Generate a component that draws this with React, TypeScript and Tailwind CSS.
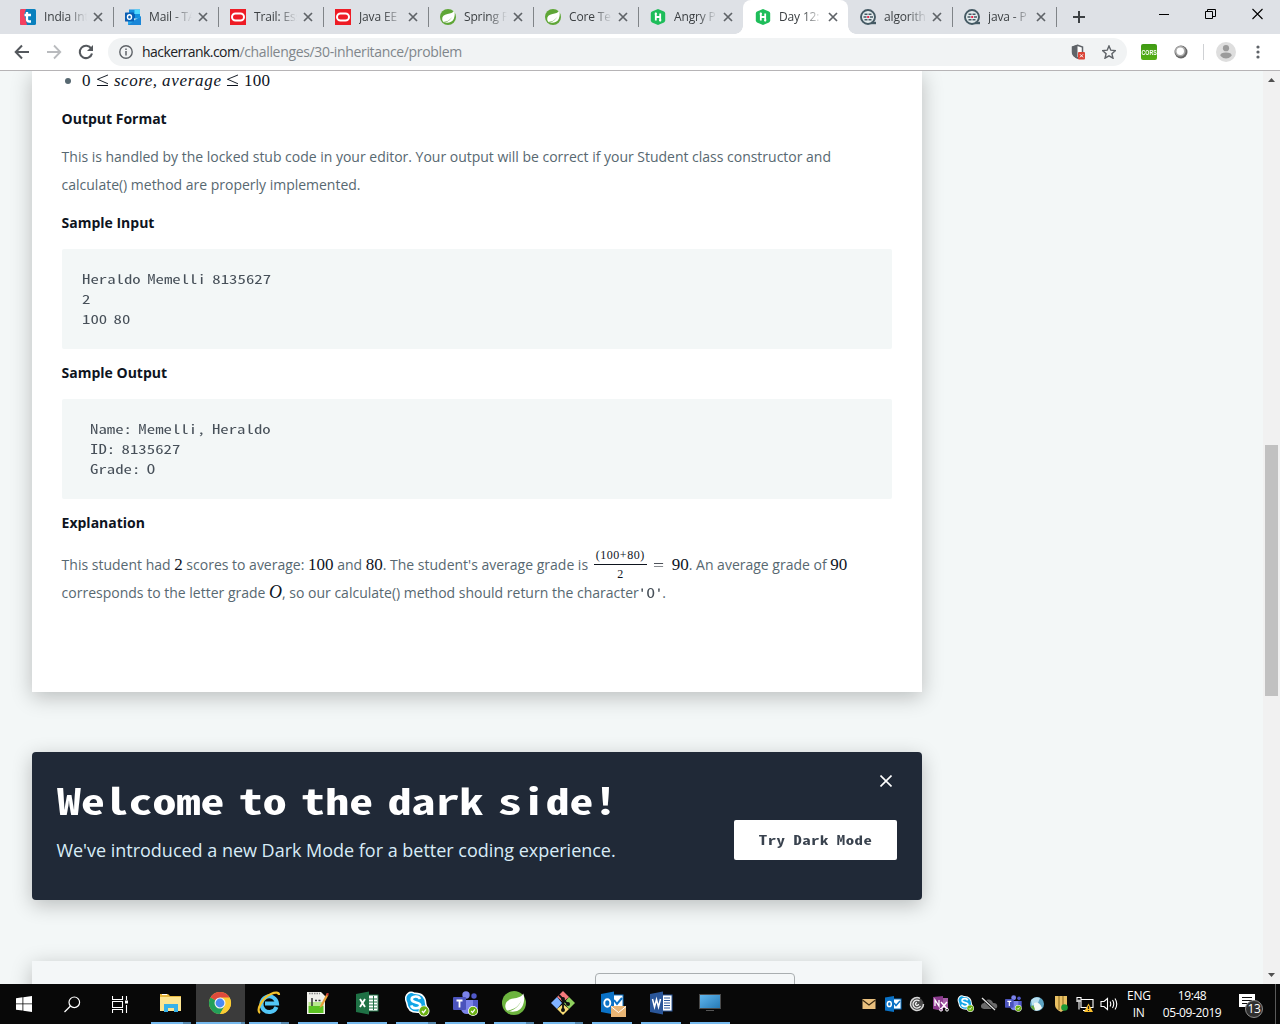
import React from "react";

const UI = "font-['Open_Sans','Noto_Sans',sans-serif]";
const MONO = "font-['Noto_Sans_Mono_CJK_SC','Liberation_Mono',monospace]";
const SERIF = "font-['Liberation_Serif',serif]";

type IconProps = { className?: string };

/* ---------- favicons ---------- */

function TcsIcon() {
  return (
    <svg width="16" height="16" viewBox="0 0 16 16">
      <rect width="16" height="16" rx="1.5" fill="#0a80bd" />
      <path d="M1.5 0H6l-2 6 1.500 4L7 16H1.500A1.500 1.500 0 0 1 0 14.500v-13A1.500 1.500 0 0 1 1.500 0z" fill="#f4405f" />
      <path d="M7 3v7.300q0 2.200 2.200 2.200H11M4.500 6H11" fill="none" stroke="#fff" strokeWidth="2.300" />
    </svg>
  );
}

function OutlookIcon() {
  return (
    <svg width="16" height="16" viewBox="0 0 16 16">
      <rect x="4" y="0.500" width="11" height="9" fill="#1490df" />
      <rect x="9.500" y="0.500" width="5.500" height="4.500" fill="#50d9ff" />
      <rect x="4" y="5" width="6" height="4" fill="#0364b8" />
      <path d="M3 7l6.500 4L16 7v9H3z" fill="#28a8ea" />
      <path d="M3 16L16 7.500V16z" fill="#1a86d8" />
      <rect x="0" y="3.500" width="9" height="9" rx="0.500" fill="#0a5fb4" />
      <ellipse cx="4.500" cy="8" rx="2" ry="2.300" fill="none" stroke="#fff" strokeWidth="1.400" />
    </svg>
  );
}

function OracleIcon() {
  return (
    <svg width="16" height="16" viewBox="0 0 16 16">
      <rect width="16" height="16" fill="#ee1c25" />
      <rect x="2" y="4.500" width="12" height="7" rx="3.500" fill="none" stroke="#fff" strokeWidth="2" />
    </svg>
  );
}

function SpringIcon({ className = "size-4", fill = "#5fa637" }: IconProps & { fill?: string }) {
  return (
    <svg className={className} viewBox="0 0 16 16">
      <circle cx="8" cy="8" r="8" fill={fill} />
      <path d="M14.200 1.600C13 4 10.500 4.500 7.500 5 4 5.600 2 7.500 2.200 10.300c.1 1.300.8 2.400 1.500 3C8 14.500 12 13.500 13.700 10c1.200-2.600 1.400-5.700.5-8.400z" fill="#fff" />
      <path d="M3 13.100c4.500-.6 7.800-2.300 9.800-6.600-1.700 4-4.600 6.300-8.300 7.100z" fill={fill} />
    </svg>
  );
}

function HackerRankIcon() {
  return (
    <svg width="16" height="16" viewBox="0 0 16 16">
      <path d="M8 0l6 2.600q1.200.6 1.200 1.800v7.200q0 1.200-1.200 1.800L8 16l-6-2.600Q.8 12.800.8 11.600V4.400Q.8 3.200 2 2.600z" fill="#1ebd5a" />
      <path d="M5.800 3.800v7.800M10.200 4.400v7.800M5.800 8h4.400" stroke="#fff" strokeWidth="1.800" fill="none" />
      <path d="M4.300 5.200l1.500-2 1.500 2zM8.700 10.800l1.500 2 1.500-2z" fill="#fff" />
    </svg>
  );
}

function QuizIcon() {
  return (
    <svg width="17" height="17" viewBox="0 0 17 17">
      <circle cx="8" cy="8" r="7" fill="#e4ecee" stroke="#455a64" strokeWidth="1.900" />
      <path d="M11 14h5" stroke="#455a64" strokeWidth="2.400" />
      <path d="M4.500 5.200h3M8.500 5.200h3M3.500 8h3M10 8h3M4.500 10.800h3M8.500 10.800h3" stroke="#455a64" strokeWidth="1.600" />
      <rect x="7.200" y="7" width="2" height="2" fill="#e8274b" />
    </svg>
  );
}

/* ---------- browser chrome ---------- */

function Cross({ className }: IconProps) {
  return (
    <svg className={className} viewBox="0 0 10 10">
      <path d="M1 1l8 8M9 1L1 9" stroke="currentColor" strokeWidth="1.700" fill="none" />
    </svg>
  );
}

type TabProps = { icon: React.ReactNode; title: string; active?: boolean; narrow?: boolean; noLine?: boolean };

function Tab({ icon, title, active, narrow, noLine }: TabProps) {
  return (
    <div
      className={`relative flex h-[34px] shrink-0 items-center pl-3 ${narrow ? "w-[104px]" : "w-[105px]"} ${
        active ? "rounded-t-lg bg-white" : ""
      }`}
    >
      <div className="w-6 shrink-0">{icon}</div>
      <div
        className={`text-[12px] leading-4 tracking-[-0.15px] whitespace-nowrap text-[#3c4043] [mask-image:linear-gradient(to_right,black_24px,transparent_43px)] ${
          narrow ? "w-[42px]" : "w-[43px]"
        }`}
      >
        {title}
      </div>
      <Cross className="ml-[6px] size-[10px] shrink-0 text-[#5f6368]" />
      {!active && !noLine && <div className="absolute top-[7px] right-[-1px] h-5 w-px bg-[#808488]" />}
      {active && (
        <>
          <div className="absolute bottom-0 left-[-8px] size-2 bg-[radial-gradient(circle_at_0_0,transparent_7.500px,white_8px)]" />
          <div className="absolute right-[-8px] bottom-0 size-2 bg-[radial-gradient(circle_at_100%_0,transparent_7.500px,white_8px)]" />
        </>
      )}
    </div>
  );
}

function TabStrip() {
  return (
    <div className="flex h-[34px] bg-[#dee1e6] pl-2">
      <Tab icon={<TcsIcon />} title="India Int" />
      <Tab icon={<OutlookIcon />} title="Mail - TA" />
      <Tab icon={<OracleIcon />} title="Trail: Ess" />
      <Tab icon={<OracleIcon />} title="Java EE" />
      <Tab icon={<SpringIcon />} title="Spring F" />
      <Tab icon={<SpringIcon />} title="Core Te" />
      <Tab icon={<HackerRankIcon />} title="Angry P" noLine />
      <Tab icon={<HackerRankIcon />} title="Day 12:" active />
      <Tab icon={<QuizIcon />} title="algorith" narrow />
      <Tab icon={<QuizIcon />} title="java - P" narrow />
      <svg className="mt-[11px] ml-[17px] size-3" viewBox="0 0 12 12">
        <path d="M6 0v12M0 6h12" stroke="#3c4043" strokeWidth="2" />
      </svg>
      <div className="ml-auto flex pt-2 pr-[17px] text-black">
        <svg width="10" height="12" viewBox="0 0 10 12" className="mr-9">
          <path d="M0 6.500h10" stroke="#000" />
        </svg>
        <svg width="11" height="12" viewBox="0 0 11 12" className="mr-9">
          <path d="M.5 3.500h7v7h-7zM2.500 3.500v-2h8v7h-3" stroke="#000" fill="none" />
        </svg>
        <svg width="11" height="12" viewBox="0 0 11 12">
          <path d="M.5 1l10 10M10.500 1L.5 11" stroke="#000" strokeWidth="1.100" />
        </svg>
      </div>
    </div>
  );
}

function Toolbar() {
  return (
    <div className="flex h-[37px] items-center border-b border-[#b6b4b6] bg-white pl-[14px]">
      <svg width="16" height="16" viewBox="0 0 16 16" className="mr-4">
        <path d="M15 8H2M8 1.500L1.700 8 8 14.500" stroke="#54585d" strokeWidth="2" fill="none" />
      </svg>
      <svg width="16" height="16" viewBox="0 0 16 16" className="mr-4">
        <path d="M1 8h13M8 1.500L14.300 8 8 14.500" stroke="#b9bbbe" strokeWidth="1.800" fill="none" />
      </svg>
      <svg width="16" height="16" viewBox="0 0 16 16">
        <path d="M13.300 4.700A6.200 6.200 0 1 0 14 9.500" stroke="#54585d" strokeWidth="2.100" fill="none" />
        <path d="M15 1v6H9z" fill="#54585d" />
      </svg>
      <div className="ml-[14px] flex h-7 w-[1019px] items-center rounded-full bg-[#f1f3f4] pl-[11px]">
        <svg width="14" height="14" viewBox="0 0 14 14">
          <circle cx="7" cy="7" r="6.200" fill="none" stroke="#5f6368" strokeWidth="1.400" />
          <path d="M7 6v4.500M7 3.400V5" stroke="#5f6368" strokeWidth="1.500" />
        </svg>
        <div className="ml-[9px] text-[14px] leading-5 tracking-[-0.340px] whitespace-nowrap text-[#80868b]">
          <span className="tracking-[-0.560px] text-[#202124]">hackerrank.com</span>/challenges/30-inheritance/problem
        </div>
        <svg width="15" height="16" viewBox="0 0 15 16" className="mr-4 ml-auto">
          <path d="M6.500 1.200L11.500 3v5q0 3-3 5l-2 1.200-2-1.200q-3-2-3-5V3z" fill="#fff" stroke="#5f6368" strokeWidth="1.500" />
          <path d="M6.500.8v13.500l-2.200-1.200Q1 11 1 8V2.800z" fill="#5f6368" />
          <rect x="7" y="8" width="7" height="7.500" rx="1" fill="#db4437" />
          <path d="M9 10.300l3 3M12 10.300l-3 3" stroke="#fff" strokeWidth="1" />
        </svg>
        <svg width="14" height="14" viewBox="1 1 14 14" className="mr-[11px]">
          <path d="M8 1.900l1.800 4.300 4.600.4-3.500 3.100 1.100 4.500L8 11.900l-4 2.300 1.100-4.500L1.600 6.600l4.600-.4z" fill="none" stroke="#5f6368" strokeWidth="1.400" />
        </svg>
      </div>
      <div className="ml-[14px] flex size-4 items-center justify-center rounded-[2px] bg-gradient-to-b from-[#3f9a14] to-[#55b016]">
        <span className="scale-x-[0.75] scale-y-110 font-['Liberation_Sans'] text-[7px] leading-none font-bold text-white">CORS</span>
      </div>
      <svg width="14" height="14" viewBox="0 0 14 14" className="ml-[17px]">
        <circle cx="7" cy="7" r="6.500" fill="#666" />
        <circle cx="6.300" cy="6.100" r="5.400" fill="#a9a9a9" />
        <circle cx="6.300" cy="6.200" r="3.700" fill="#fff" />
      </svg>
      <div className="ml-[15px] h-4 w-px bg-[#cfd1d4]" />
      <svg width="20" height="20" viewBox="0 0 20 20" className="ml-3">
        <circle cx="10" cy="10" r="10" fill="#dedede" />
        <circle cx="10" cy="6.200" r="3.100" fill="#9b9b9b" />
        <path d="M4.300 13.800q0-3.300 5.700-3.300t5.700 3.300q-2.300 2.700-5.700 2.700t-5.700-2.700z" fill="#9b9b9b" />
      </svg>
      <svg width="4" height="14" viewBox="0 0 4 14" className="ml-5">
        <circle cx="2" cy="2" r="1.600" fill="#5f6368" />
        <circle cx="2" cy="7" r="1.600" fill="#5f6368" />
        <circle cx="2" cy="12" r="1.600" fill="#5f6368" />
      </svg>
    </div>
  );
}

/* ---------- page ---------- */

function Heading({ children }: { children: React.ReactNode }) {
  return <h3 className="-ml-[0.4px] h-7 text-[14px] leading-7 font-bold tracking-[-0.010px] text-[#0e141e]">{children}</h3>;
}

function Code({ children, indent }: { children: string; indent?: boolean }) {
  return (
    <div className={`h-[100px] rounded-[2px] bg-[#f3f7f7] pt-5 ${indent ? "pl-7" : "pl-5"}`}>
      <pre className={`w-fit origin-left scale-x-[1.333] text-[12.600px] leading-5 [word-spacing:-1.500px] text-[#475059] ${MONO}`}>
        {children}
      </pre>
    </div>
  );
}

function M({ children, className = "text-[17px]" }: { children: React.ReactNode; className?: string }) {
  return <span className={`inline-block leading-none text-[#0e141e] ${SERIF} ${className}`}>{children}</span>;
}

function Problem() {
  return (
    <section className="flow-root h-[621px] w-[890px] bg-white px-[30px] text-[14px] leading-7 text-[#576871] shadow-[0_5px_20px_rgba(0,0,0,0.24)]">
      <div className="-mt-[2px] flex h-[26px] items-baseline whitespace-nowrap">
        <span className="mr-[11px] ml-[3px] size-[6px] -translate-y-[2px] rounded-full bg-[#576871]" />
        <M className="w-[14px] text-[17px]">0</M>
        <M className="w-[18px] text-[20px]">
          <span className="inline-block origin-left scale-x-[1.180]">≤</span>
        </M>
        <M className="w-[48px] text-[17px] tracking-[0.500px] italic">score,</M>
        <M className="w-[64px] text-[17px] tracking-[0.700px] italic">average</M>
        <M className="w-[18px] text-[20px]">
          <span className="inline-block origin-left scale-x-[1.180]">≤</span>
        </M>
        <M className="text-[17px] tracking-[0.200px]">100</M>
      </div>
      <div className="mt-[10px]">
        <Heading>Output Format</Heading>
      </div>
      <p className="mt-[10px] -ml-[0.4px] tracking-[-0.012px] whitespace-nowrap">
        This is handled by the locked stub code in your editor. Your output will be correct if your Student class constructor and
        <br />
        calculate() method are properly implemented.
      </p>
      <div className="mt-[10px] mb-3">
        <Heading>Sample Input</Heading>
      </div>
      <Code>{"Heraldo Memelli 8135627\n2\n100 80"}</Code>
      <div className="mt-[10px] mb-3">
        <Heading>Sample Output</Heading>
      </div>
      <Code indent>{"Name: Memelli, Heraldo\nID: 8135627\nGrade: O"}</Code>
      <div className="mt-[10px]">
        <Heading>Explanation</Heading>
      </div>
      <div className="mt-[14px] -ml-[0.4px] flex h-7 items-baseline whitespace-pre">
        <span>This student had </span>
        <M>2</M>
        <span> scores to average: </span>
        <M>100</M>
        <span> and </span>
        <M>80</M>
        <span>. The student's average grade is </span>
        <span className={`ml-[2px] flex h-7 w-[53px] flex-col items-center self-start text-[12px] leading-[14px] text-[#0e141e] ${SERIF}`}>
          <span className="-mt-[3px] h-[18px] tracking-[0.550px]">(100+80)</span>
          <span className="mt-[2px] h-px w-full shrink-0 bg-[#0e141e]" />
          <span className="mt-[2px]">2</span>
        </span>
        <M className="ml-[6px] w-[19px]">
          <span className="inline-block origin-left scale-x-[1.400]">=</span>
        </M>
        <M>90</M>
        <span>. An average grade of </span>
        <M>90</M>
      </div>
      <div className="-ml-[0.4px] flex h-7 items-baseline whitespace-pre">
        <span>corresponds to the letter grade </span>
        <M className="w-[13px] text-[18px] italic">O</M>
        <span>, so our calculate() method should return the character</span>
        <span className={`-ml-px w-[24.500px] origin-left scale-x-[1.333] text-[12.600px] leading-none text-[#475059] ${MONO}`}>'O'</span>
        <span>.</span>
      </div>
    </section>
  );
}

function Banner() {
  return (
    <section className="mt-[60px] flex h-[148px] w-[890px] justify-between rounded bg-[#202937] pr-[25px] pl-6 shadow-[0_5px_20px_rgba(0,0,0,0.24)]">
      <div>
        <h2
          className={`mt-[23px] ml-[0.500px] h-12 w-fit origin-left scale-x-[1.328] text-[36px] leading-[48px] font-bold whitespace-nowrap text-white [word-spacing:-7px] ${MONO}`}
        >
          Welcome to the dark side!
        </h2>
        <p className="mt-[13px] ml-[0.400px] text-[18px] leading-7 tracking-[-0.015px] whitespace-nowrap text-[#d8ecf7]">
          We've introduced a new Dark Mode for a better coding experience.
        </p>
      </div>
      <div className="flex flex-col items-end">
        <svg width="12" height="12" viewBox="0 0 12 12" className="mt-[23.400px] mr-[4.600px]">
          <path d="M.5.5l11 11M11.500.5l-11 11" stroke="#fff" strokeWidth="1.600" />
        </svg>
        <button className="mt-[32.600px] flex h-10 w-[163px] items-center justify-center rounded-[2px] bg-white">
          <span className={`scale-x-[1.333] text-[12.600px] leading-5 font-bold tracking-[0.340px] whitespace-nowrap text-[#39424e] [word-spacing:-0.600px] ${MONO}`}>
            Try Dark Mode
          </span>
        </button>
      </div>
    </section>
  );
}

function Page() {
  return (
    <div className="flex h-[913px] overflow-hidden bg-[#f3f7f7]">
      <main className="flex-1 overflow-hidden pl-8">
        <Problem />
        <Banner />
        <section className="mt-[61px] h-24 w-[890px] bg-[#f4f7f8] pt-3 pl-[563px] shadow-[0_5px_20px_rgba(0,0,0,0.24)]">
          <div className="h-10 w-[200px] rounded border border-[#a9aeb0]" />
        </section>
      </main>
      <div className="flex w-[17px] flex-col items-center justify-between bg-[#f1f1f1]">
        <svg width="17" height="17" viewBox="0 0 17 17">
          <path d="M5 11h7L8.500 7z" fill="#505050" />
        </svg>
        <div className="mt-[86px] h-[251px] w-[13px] bg-[#c1c1c1]" />
        <svg width="17" height="17" viewBox="0 0 17 17">
          <path d="M5 6h7l-3.500 4z" fill="#505050" />
        </svg>
      </div>
    </div>
  );
}

/* ---------- task bar ---------- */

function Explorer() {
  return (
    <svg width="24" height="24" viewBox="0 0 24 24">
      <path d="M1 3h8l2 2h11v15H1z" fill="#e8b83e" />
      <path d="M1 6h21v14H1z" fill="#fde591" />
      <path d="M3 3.500h5" stroke="#fff" />
      <path d="M5 21v-8h14v8h-4v-4H9v4z" fill="#37b1e8" />
    </svg>
  );
}

function Chrome() {
  return (
    <svg width="24" height="24" viewBox="0 0 24 24">
      <circle cx="12" cy="12" r="11" fill="#fbcc34" />
      <path d="M12 12L2.470 6.500A11 11 0 0 1 21.530 6.500z" fill="#df4a3c" />
      <path d="M12 12L2.470 6.500A11 11 0 0 0 12 23l4.800-8.200z" fill="#23a05a" />
      <path d="M12 6.500h9.530A11 11 0 0 1 12 23l4.800-8.200z" fill="#fbcc34" />
      <circle cx="12" cy="12" r="5.500" fill="#f5f5f5" />
      <circle cx="12" cy="12" r="4.400" fill="#4a8af4" />
    </svg>
  );
}

function InternetExplorer() {
  return (
    <svg width="24" height="24" viewBox="0 0 24 24">
      <path d="M19.500 16A7.800 7.800 0 1 1 20 12.500H8" fill="none" stroke="#52c6f7" strokeWidth="4" />
      <path d="M3 22C-1 19 5 7 14 3c5-2.300 8-1.500 8 1" fill="none" stroke="#f2c22c" strokeWidth="2.200" />
    </svg>
  );
}

function Notepad() {
  return (
    <svg width="24" height="24" viewBox="0 0 24 24">
      <path d="M1 1h14l4 4v18H1z" fill="#f1f1ec" />
      <path d="M2.500 15h15v7h-15z" fill="#5cc322" />
      <path d="M2.500 11h15v4h-15z" fill="#b8e88c" />
      <path d="M3 2.500h11" stroke="#8b8b8b" strokeWidth="1.500" strokeDasharray="1.500 1" />
      <path d="M6 7v8M9 9.500h2M12.500 9.500h2" stroke="#333" strokeWidth="1.500" />
      <path d="M21 2l-6.500 12-1 3 3-2L22.500 4z" fill="#e9a13a" />
      <path d="M21 2l-1 2 1.500 1L23 2.500z" fill="#c33" />
    </svg>
  );
}

function OfficeApp({ kind }: { kind: "X" | "W" | "O" }) {
  const color = kind === "X" ? "#1f7145" : kind === "W" ? "#2a5699" : "#0a72c6";
  return (
    <svg width="24" height="24" viewBox="0 0 24 24" className="overflow-visible">
      <rect x="12" y="4" width="11" height="16" fill="#fff" stroke={color} />
      {kind === "X" && <path d="M18.500 5v14M14 8h8M14 11h8M14 14h8M14 17h8" stroke={color} />}
      {kind === "W" && <path d="M15 7h6M15 9.500h6M15 12h6M15 14.500h6M15 17h6" stroke={color} />}
      {kind === "O" && <path d="M14 9l3 4 5-6" stroke={color} strokeWidth="2" fill="none" />}
      <path d="M1 3l13-2.500v23L1 21z" fill={color} />
      {kind === "X" && <path d="M5 8l5 8M10 8l-5 8" stroke="#fff" strokeWidth="1.900" />}
      {kind === "W" && <path d="M3.500 8l2 8 2-7.500 2 7.500 2-8" stroke="#fff" strokeWidth="1.500" fill="none" />}
      {kind === "O" && <ellipse cx="7.300" cy="12" rx="3" ry="3.800" stroke="#fff" strokeWidth="1.900" fill="none" />}
      {kind === "O" && (
        <>
          <rect x="11" y="15" width="15" height="11" fill="#e9b574" />
          <path d="M11 15.500l7.500 6 7.500-6" stroke="#fff" fill="none" />
        </>
      )}
    </svg>
  );
}

function Check({ x, y, r }: { x: number; y: number; r: number }) {
  return (
    <g transform={`translate(${x} ${y}) scale(${r / 5})`}>
      <circle r="5.500" fill="#fff" />
      <circle r="4.700" fill="#6bb012" />
      <path d="M-2 0l1.500 1.700L2-1.700" stroke="#fff" strokeWidth="1.300" fill="none" />
    </g>
  );
}

function Skype({ className = "size-6" }: IconProps) {
  return (
    <svg className={`overflow-visible ${className}`} viewBox="0 0 24 24">
      <path d="M7 .5Q9 .5 10.500 1.500 22 1 22.500 13q1.500 2.500.5 6-3 5-8.500 3Q3 22.500 2 12 .5 9 1 6q2-5.500 6-5.500z" fill="#fff" />
      <path d="M7 2q2 0 3 1 10.500-.5 11 10 1 2.500 0 5-2.500 3.500-6.500 2.500Q4 21 3.500 11.500 2 9 2.500 6 4 2.500 7 2z" fill="#12a5e6" />
      <path d="M16 8q-1-2.700-4.500-2.500Q7.500 5.800 7.700 8.500q.2 2 4.300 2.900 4.500 1 4.300 3-.3 2.800-4.300 2.900-4 0-4.800-3" stroke="#fff" strokeWidth="2.600" fill="none" />
      <Check x={20} y={20} r={5} />
    </svg>
  );
}

function Teams({ className = "size-6" }: IconProps) {
  return (
    <svg className={`overflow-visible ${className}`} viewBox="0 0 24 24">
      <circle cx="13" cy="4" r="3.700" fill="#7b83eb" />
      <circle cx="21" cy="5" r="2.700" fill="#5059c9" />
      <path d="M17 9h8v8q-1 4-5 4h-4z" fill="#5059c9" />
      <path d="M8 9h12v9q-1 5-6 5t-6-5z" fill="#7b83eb" />
      <rect x="0" y="6" width="13" height="13" rx="1" fill="#4b53bc" />
      <path d="M3.500 9.500h6M6.500 9.500v7" stroke="#fff" strokeWidth="1.800" />
      <Check x={20} y={20} r={4.6} />
    </svg>
  );
}

function GitIcon() {
  return (
    <svg width="26" height="26" viewBox="0 0 26 26">
      <path d="M13 1l6 6-6 5-6-5z" fill="#f4797c" />
      <path d="M7 7l5 6-5 6-6-6z" fill="#80b3ff" />
      <path d="M19 7l6 6-6 6-5-6z" fill="#8fd15e" />
      <path d="M13 25l-6-6 6-5 6 5z" fill="#f9dd74" />
      <path d="M9 5l4 4v12M13 10l5 4" stroke="#111" strokeWidth="1.800" fill="none" />
      <circle cx="13" cy="9" r="2" fill="#111" />
      <circle cx="18" cy="14" r="2" fill="#111" />
      <circle cx="13" cy="20" r="2" fill="#111" />
    </svg>
  );
}

function Monitor() {
  return (
    <svg width="24" height="24" viewBox="0 0 24 24">
      <defs>
        <linearGradient id="screen" x1="0" y1="0" x2="1" y2="1">
          <stop offset="0" stopColor="#62b8f0" />
          <stop offset="1" stopColor="#2478b4" />
        </linearGradient>
      </defs>
      <rect x="1.500" y="3.500" width="21" height="14" fill="url(#screen)" stroke="#4b4b4b" />
      <path d="M8 19.500h8" stroke="#555" />
    </svg>
  );
}

type TaskProps = { children: React.ReactNode; active?: boolean; stacked?: boolean };

function Task({ children, active, stacked }: TaskProps) {
  return (
    <div className={`flex h-10 w-[49px] shrink-0 flex-col items-center ${active ? "bg-[#3b3b3b]" : "pr-px"}`}>
      <div className={`flex h-[38px] items-center justify-center ${active ? "pr-px" : ""}`}>{children}</div>
      <div className={`flex h-[2px] justify-end bg-[#76b9ed] ${active ? "w-[49px]" : "w-10"}`}>
        {stacked && <div className={`h-[2px] bg-[#5587ad] ${active ? "w-1" : "w-2"}`} />}
      </div>
    </div>
  );
}

function Tray({ children }: { children: React.ReactNode }) {
  return (
    <svg width="18" height="18" viewBox="0 0 18 18" className="mr-[6.100px] shrink-0">
      {children}
    </svg>
  );
}

function TaskBar() {
  return (
    <footer className="flex h-10 items-center bg-[#080808] text-white">
      <div className="flex w-[147px] shrink-0 items-center pl-4">
        <svg width="16" height="16" viewBox="0 0 16 16">
          <path d="M0 2.200l6.500-.9v6.200H0zM7.300 1.200L16 0v7.500H7.300zM0 8.300h6.500v6.300L0 13.700zM7.300 8.300H16V16l-8.700-1.200z" fill="#fff" />
        </svg>
        <svg width="17" height="17" viewBox="0 0 17 17" className="ml-8">
          <circle cx="10.300" cy="6.300" r="5.300" fill="none" stroke="#fff" strokeWidth="1.200" />
          <path d="M6.500 10L.5 16" stroke="#fff" strokeWidth="1.300" />
        </svg>
        <svg width="17" height="17" viewBox="0 0 17 17" className="ml-[31px]">
          <path d="M.5 0v3.500h10V0M.5 17v-3.500h10V17M.5 5.500h10v6H.5zM14.500 0v4M14.500 9v8" fill="none" stroke="#fff" strokeWidth="1.100" />
          <rect x="13" y="4.500" width="3" height="3" fill="#fff" />
        </svg>
      </div>
      <Task stacked><Explorer /></Task>
      <Task active stacked><Chrome /></Task>
      <Task stacked><InternetExplorer /></Task>
      <Task><Notepad /></Task>
      <Task><OfficeApp kind="X" /></Task>
      <Task stacked><Skype /></Task>
      <Task><Teams /></Task>
      <Task stacked><SpringIcon className="size-6" fill="#6cb33e" /></Task>
      <Task stacked><GitIcon /></Task>
      <Task><OfficeApp kind="O" /></Task>
      <Task><OfficeApp kind="W" /></Task>
      <Task><Monitor /></Task>

      <div className="ml-[124.500px] flex shrink-0 items-center">
        <Tray>
          <rect x="2.500" y="4" width="13" height="10" fill="#e9bf7d" />
          <path d="M2.500 5l6.500 5 6.500-5" stroke="#3b2a12" fill="none" strokeWidth="1.200" />
        </Tray>
        <Tray>
          <rect x="8" y="4" width="9" height="10" fill="#fff" stroke="#0a72c6" />
          <path d="M10 8l2 2.500L16 6" stroke="#0a72c6" strokeWidth="1.500" fill="none" />
          <path d="M1 2.500L10 1v16l-9-1.500z" fill="#0a72c6" />
          <ellipse cx="5.300" cy="9" rx="2" ry="2.600" stroke="#fff" strokeWidth="1.500" fill="none" />
        </Tray>
        <Tray>
          <circle cx="9" cy="9" r="6.500" fill="#4c4c4c" />
          <path d="M15.500 9A6.500 6.500 0 1 1 12 3.300" stroke="#d7d7d7" strokeWidth="1.500" fill="none" />
          <path d="M12.500 11a4 4 0 1 1-1-5M10.500 9a1.500 1.500 0 1 1-1.500-1.500" stroke="#eee" strokeWidth="1.300" fill="none" />
        </Tray>
        <Tray>
          <path d="M1 2l10-1v15L1 14z" fill="#8b3a8d" />
          <path d="M11 3h5v10h-5z" fill="#a65fa8" />
          <path d="M3 11V5l4 6V5" stroke="#fff" strokeWidth="1.300" fill="none" />
          <path d="M9 7l6 7M15 7l-6 7" stroke="#fff" strokeWidth="1.400" />
          <circle cx="9" cy="14.700" r="1.400" stroke="#fff" fill="none" />
          <circle cx="15" cy="14.700" r="1.400" stroke="#fff" fill="none" />
        </Tray>
        <div className="mr-[6.100px] size-[18px] pl-px"><Skype className="size-4" /></div>
        <Tray>
          <path d="M4 14q-3.500-.5-3-3.500Q1.500 8 4 8q1-3.500 4.500-3.500T13 8q4-.3 4.300 3 0 3-3.300 3z" fill="#6b6b6b" />
          <path d="M2 3l13 12" stroke="#080808" strokeWidth="3" />
          <path d="M2 3l13 12" stroke="#e4e4e4" strokeWidth="1.300" />
        </Tray>
        <div className="mr-[6.100px] size-[18px] pl-px"><Teams className="size-4" /></div>
        <Tray>
          <circle cx="9" cy="9" r="7" fill="#5da4c4" />
          <path d="M3 5q4-4 9-2l-2 5-6 3z" fill="#b9dff0" />
          <path d="M6 8q5-2 8 5-4 4-8 2z" fill="#f2f7f2" />
          <path d="M3 11q3-2 4 4-3 0-4-4z" fill="#66a637" />
        </Tray>
        <Tray>
          <path d="M3 1h12v10q-2 4-6 6-6-3-6-7z" fill="#e9c063" />
          <path d="M7 1v14M11 1v12" stroke="#8a6a20" />
          <circle cx="12.500" cy="12.500" r="3.300" fill="#1c9a36" />
        </Tray>
        <Tray>
          <path d="M5 4.500h12v8H5zM1 2v5M3 4.500v10M1 2.500h4v3.500H1M7 15.500h6" stroke="#fff" fill="none" strokeWidth="1.100" />
          <path d="M12.500 8.500l4.500 8.500H8z" fill="#fbc02d" />
          <path d="M12.500 11v3M12.500 15v1" stroke="#222" strokeWidth="1.200" />
        </Tray>
        <Tray>
          <path d="M1 6.500h3l3.500-3v11L4 11.500H1z" stroke="#fff" fill="none" strokeWidth="1.100" />
          <path d="M10 6.500q1.500 2.500 0 5M12.500 5q2.500 4 0 8M15 3.500q3.500 5.500 0 11" stroke="#fff" fill="none" strokeWidth="1.100" />
        </Tray>
      </div>
      <div className="ml-[2.500px] w-[23px] text-center text-[12px] leading-[17.500px] tracking-[-0.300px]">
        ENG
        <br />
        IN
      </div>
      <div className="ml-3 w-[60px] text-center text-[12px] leading-[17.500px] tracking-[-0.400px] whitespace-nowrap">
        19:48
        <br />
        05-09-2019
      </div>
      <div className="relative ml-[17px] h-7 w-[26px]">
        <svg width="16" height="17" viewBox="0 0 16 17" className="mt-1">
          <path d="M0 0h16v13h-4l-3 3v-3H0z" fill="#fff" />
          <path d="M3 3.500h10M3 6.500h10M3 9.500h6" stroke="#111" strokeWidth="1.200" />
        </svg>
        <div className="absolute top-[10px] left-[6px] flex size-[18px] items-center justify-center rounded-full border border-[#8d8d8d] bg-[#2f2f2f] text-[12px] leading-none tracking-[-0.400px]">
          13
        </div>
      </div>
      <div className="ml-auto mr-1 h-10 w-px bg-[#5a5a5a]" />
    </footer>
  );
}

export default function App() {
  return (
    <div className={`h-[1024px] w-[1280px] overflow-hidden ${UI}`}>
      <TabStrip />
      <Toolbar />
      <Page />
      <TaskBar />
    </div>
  );
}
